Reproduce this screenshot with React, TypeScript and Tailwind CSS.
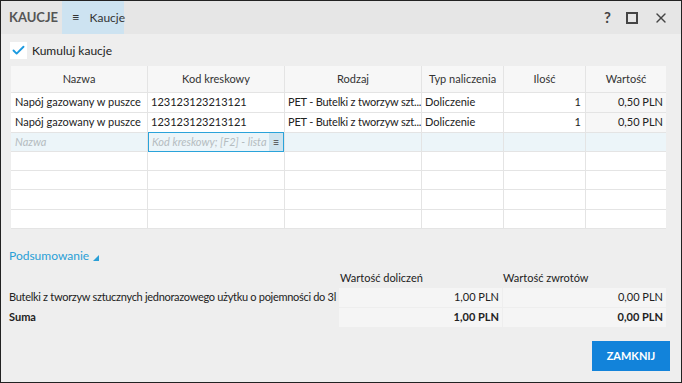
import React from 'react';
import { Check, X } from 'lucide-react';

const font = { fontFamily: 'Lato, "Open Sans", sans-serif' };

const cols = [
  { key: 'nazwa', label: 'Nazwa', w: 'w-[136px]' },
  { key: 'kod', label: 'Kod kreskowy', w: 'w-[136px]' },
  { key: 'rodzaj', label: 'Rodzaj', w: 'w-[136px]' },
  { key: 'typ', label: 'Typ naliczenia', w: 'w-[81px]' },
  { key: 'ilosc', label: 'Ilość', w: 'w-[81px]' },
  { key: 'wartosc', label: 'Wartość', w: 'flex-1' },
];

const rows = [
  { nazwa: 'Napój gazowany w puszce', kod: '123123123213121', rodzaj: 'PET - Butelki z tworzyw szt...', typ: 'Doliczenie', ilosc: '1', wartosc: '0,50 PLN' },
  { nazwa: 'Napój gazowany w puszce', kod: '123123123213121', rodzaj: 'PET - Butelki z tworzyw szt...', typ: 'Doliczenie', ilosc: '1', wartosc: '0,50 PLN' },
];

const emptyHeights = ['h-[18px]', 'h-[18px]', 'h-[19px]', 'h-[18px]'];

export default function App() {
  return (
    <div style={font} className="w-[682px] h-[383px] bg-[#eeeeee] border border-[#222] flex flex-col text-[11px] text-[#222] overflow-hidden">
      {/* Title bar */}
      <div className="h-[33px] bg-[#e6e6e6] flex items-stretch shrink-0">
        <div className="w-[61px] pl-[8px] flex items-center font-bold text-[13px] text-[#555]">KAUCJE</div>
        <div className="bg-[#cde3f1] w-[62px] flex items-center pl-[10px] gap-[10px] text-[12px] text-[#333]">
          <span className="text-[13px] leading-none">≡</span>
          <span>Kaucje</span>
        </div>
        <div className="flex-1" />
        <div className="flex items-center gap-[15px] pr-[12px] text-[#444]">
          <span className="text-[15px] font-bold">?</span>
          <div className="w-[12px] h-[12px] border-[2px] border-[#444]" />
          <X size={16} strokeWidth={2} />
        </div>
      </div>

      {/* Body */}
      <div className="flex-1 flex flex-col px-[10px]">
        <div className="flex items-center h-[17px] mt-[8px] -ml-[1px] gap-[5px] text-[12px]">
          <div className="w-[17px] h-[17px] bg-white flex items-center justify-center">
            <Check size={15} strokeWidth={3} className="text-[#1b9ae0]" />
          </div>
          <span>Kumuluj kaucje</span>
        </div>

        {/* Grid */}
        <div className="mt-[7px] mr-[5px] bg-[#e4e4e4] flex flex-col gap-[1px] pb-[1px]">
          <div className="flex gap-[1px] h-[26px]">
            {cols.map((c) => (
              <div key={c.key} className={`${c.w} bg-[#f7f7f7] flex items-center justify-center text-[#333]`}>{c.label}</div>
            ))}
          </div>
          {rows.map((r, i) => (
            <div key={i} className="flex gap-[1px] h-[19px]">
              <div className="w-[136px] bg-white flex items-center px-[4px] whitespace-nowrap overflow-hidden">{r.nazwa}</div>
              <div className="w-[136px] bg-white flex items-center px-[3px]">{r.kod}</div>
              <div className="w-[136px] bg-white flex items-center px-[3px] whitespace-nowrap overflow-hidden tracking-[-0.2px]">{r.rodzaj}</div>
              <div className="w-[81px] bg-white flex items-center px-[3px]">{r.typ}</div>
              <div className="w-[81px] bg-white flex items-center justify-end px-[4px]">{r.ilosc}</div>
              <div className="flex-1 bg-[#f7f7f7] flex items-center justify-end px-[3px]">{r.wartosc}</div>
            </div>
          ))}
          <div className="flex gap-[1px] h-[18px]">
            <div className="w-[136px] bg-[#ecf5f9] flex items-center px-[4px] italic text-[#b5bcc0]">Nazwa</div>
            <div className="w-[136px] bg-[#ecf5f9] flex items-stretch border border-[#2aa3da] -my-[1px] h-[20px]">
              <div className="flex-1 flex items-center px-[3px] italic text-[#b5bcc0] whitespace-nowrap overflow-hidden">Kod kreskowy; [F2] - lista</div>
              <div className="w-[14px] bg-[#cfe4ef] flex items-center justify-center text-[11px] text-[#444]">≡</div>
            </div>
            <div className="w-[136px] bg-[#ecf5f9]" />
            <div className="w-[81px] bg-[#ecf5f9]" />
            <div className="w-[81px] bg-[#ecf5f9]" />
            <div className="flex-1 bg-[#ecf5f9]" />
          </div>
          {emptyHeights.map((h, i) => (
            <div key={i} className={`flex gap-[1px] ${h}`}>
              <div className="w-[136px] bg-white" />
              <div className="w-[136px] bg-white" />
              <div className="w-[136px] bg-white" />
              <div className="w-[81px] bg-white" />
              <div className="w-[81px] bg-white" />
              <div className="flex-1 bg-white" />
            </div>
          ))}
        </div>

        {/* Summary */}
        <div className="mt-[18px] -ml-[2px] flex items-center gap-[4px] text-[#2a9fd6] text-[12px]">
          <span>Podsumowanie</span>
          <svg width="6" height="6" viewBox="0 0 6 6" className="mt-[3px]"><polygon points="6,0 6,6 0,6" fill="#2a9fd6" /></svg>
        </div>
        <div className="mt-[5px] -ml-[2px] mr-[5px] flex flex-col gap-[1px]">
          <div className="flex h-[17px] items-center gap-[1px]">
            <div className="w-[329px]" />
            <div className="w-[163px] pl-[1px]">Wartość doliczeń</div>
            <div className="flex-1">Wartość zwrotów</div>
          </div>
          <div className="flex h-[19px] gap-[1px]">
            <div className="w-[329px] flex items-center whitespace-nowrap tracking-[-0.3px]">Butelki z tworzyw sztucznych jednorazowego użytku o pojemności do 3l</div>
            <div className="w-[163px] bg-[#f5f5f5] flex items-center justify-end px-[3px]">1,00 PLN</div>
            <div className="flex-1 bg-[#f5f5f5] flex items-center justify-end px-[3px]">0,00 PLN</div>
          </div>
          <div className="flex h-[19px] gap-[1px] font-bold">
            <div className="w-[329px] flex items-center">Suma</div>
            <div className="w-[163px] bg-[#f5f5f5] flex items-center justify-end px-[3px]">1,00 PLN</div>
            <div className="flex-1 bg-[#f5f5f5] flex items-center justify-end px-[3px]">0,00 PLN</div>
          </div>
        </div>

        <div className="flex justify-end mt-[14px] pr-[1px]">
          <button className="w-[78px] h-[30px] bg-[#1283da] text-white font-bold text-[11px]">ZAMKNIJ</button>
        </div>
      </div>
    </div>
  );
}
